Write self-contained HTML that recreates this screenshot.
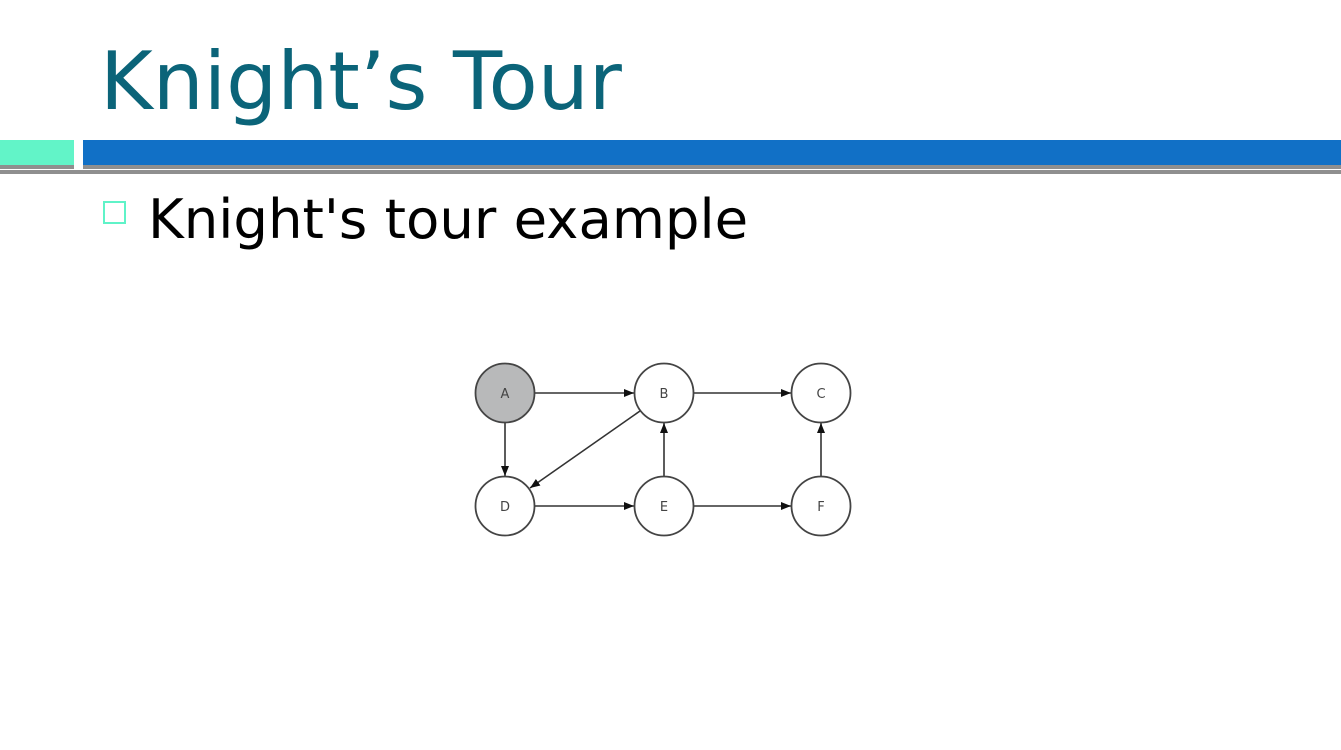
<!DOCTYPE html>
<html><head><meta charset="utf-8"><style>
body{margin:0;width:1341px;height:750px;background:#fff;position:relative;overflow:hidden;font-family:"DejaVu Sans","Liberation Sans",sans-serif}
.t{position:absolute;left:100px;top:41px;font-size:80.5px;color:#0b6479;line-height:1;white-space:nowrap}
.b{position:absolute;left:148px;top:192px;font-size:54.5px;color:#000;line-height:1;white-space:nowrap}
.sq{position:absolute;left:103px;top:201px;width:23px;height:23px;border:2px solid #5ff3c8;box-sizing:border-box}
</style></head><body>
<div class="t">Knight’s Tour</div>
<div style="position:absolute;left:0;top:140px;width:74px;height:25px;background:#62f4c8"></div>
<div style="position:absolute;left:83px;top:140px;width:1258px;height:25px;background:#1170c6"></div>
<div style="position:absolute;left:0;top:165px;width:74px;height:4px;background:#8f8f8f"></div>
<div style="position:absolute;left:83px;top:165px;width:1258px;height:4px;background:#8f8f8f"></div>
<div style="position:absolute;left:0;top:170px;width:1341px;height:4px;background:#8f8f8f"></div>
<div class="sq"></div>
<div class="b">Knight's tour example</div>
<svg style="position:absolute;left:0;top:0" width="1341" height="750">
<defs><marker id="a" markerWidth="10" markerHeight="8" refX="10" refY="4" orient="auto" markerUnits="userSpaceOnUse"><path d="M0,0 L10,4 L0,8z" fill="#111"/></marker></defs>
<g stroke="#333" stroke-width="1.6" fill="none">
<line x1="535" y1="393" x2="634" y2="393" marker-end="url(#a)"/>
<line x1="694" y1="393" x2="791" y2="393" marker-end="url(#a)"/>
<line x1="505" y1="423" x2="505" y2="476" marker-end="url(#a)"/>
<line x1="640" y1="411" x2="530" y2="488" marker-end="url(#a)"/>
<line x1="664" y1="476" x2="664" y2="423" marker-end="url(#a)"/>
<line x1="821" y1="476" x2="821" y2="423" marker-end="url(#a)"/>
<line x1="535" y1="506" x2="634" y2="506" marker-end="url(#a)"/>
<line x1="694" y1="506" x2="791" y2="506" marker-end="url(#a)"/>
</g>
<g stroke="#444" stroke-width="1.8">
<circle cx="505" cy="393" r="29.5" fill="#b8b9ba"/>
<circle cx="664" cy="393" r="29.5" fill="#fff"/>
<circle cx="821" cy="393" r="29.5" fill="#fff"/>
<circle cx="505" cy="506" r="29.5" fill="#fff"/>
<circle cx="664" cy="506" r="29.5" fill="#fff"/>
<circle cx="821" cy="506" r="29.5" fill="#fff"/>
</g>
<g font-family="DejaVu Sans,sans-serif" font-size="13" fill="#444" text-anchor="middle">
<text x="505" y="398">A</text><text x="664" y="398">B</text><text x="821" y="398">C</text>
<text x="505" y="511">D</text><text x="664" y="511">E</text><text x="821" y="511">F</text>
</g>
</svg>
</body></html>
